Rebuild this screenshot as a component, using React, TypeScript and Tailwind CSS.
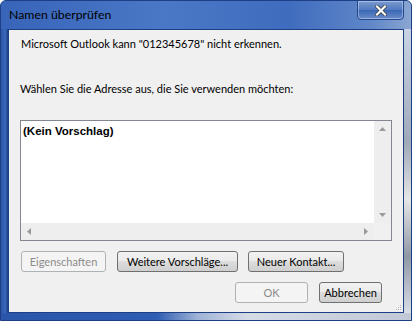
import React from "react";

const font = { fontFamily: 'Lato, "Noto Sans", "Liberation Sans", sans-serif' };

function Btn({ label, w, disabled }: { label: string; w: string; disabled?: boolean }) {
  return (
    <div
      className={
        "flex h-[21px] items-center justify-center rounded-[3px] border text-[11px] leading-none " +
        w +
        (disabled
          ? " border-[#adb2b5] bg-[#f4f4f4] text-[#8b8b8b]"
          : " border-[#707070] bg-[linear-gradient(#f2f2f2_0%,#ebebeb_45%,#dddddd_50%,#cfcfcf_100%)] text-[#000]")
      }
    >
      <span className="pb-[1px]">{label}</span>
    </div>
  );
}

export default function App() {
  return (
    <div className="relative h-[321px] w-[412px] overflow-hidden bg-white" style={font}>
      <div className="flex h-full w-full flex-col overflow-hidden rounded-t-[6px] border border-[#1c3f86] bg-[#2f5db3]">
        {/* title bar */}
        <div className="relative flex h-[28px] items-center bg-[linear-gradient(90deg,#3864b9_0%,#4a78c6_40%,#3f6cbe_70%,#5f86c8_90%,#8aa6d2_100%)] pl-[8px]">
          <span className="text-[12.3px] text-black">Namen überprüfen</span>
          <div className="absolute right-[7px] top-[-1px] flex h-[20px] w-[47px] items-center justify-center rounded-b-[4px] border border-[#24478e] bg-[linear-gradient(#7c9bd0,#4f79c1_50%,#3a66b4_51%,#6a8dc9)] shadow-[inset_0_0_0_1px_rgba(255,255,255,0.35)]">
            <svg width="12" height="11" viewBox="0 0 12 11">
              <path d="M2 1.5 L10 9.5 M10 1.5 L2 9.5" stroke="#333" strokeWidth="3.6" strokeLinecap="square" />
              <path d="M2 1.5 L10 9.5 M10 1.5 L2 9.5" stroke="#fff" strokeWidth="2.2" strokeLinecap="square" />
            </svg>
          </div>
        </div>
        <div className="flex flex-1">
          <div className="w-[7px] bg-[linear-gradient(90deg,#2a55aa,#3b68ba_60%,#1c3f86)]" />
          {/* client */}
          <div className="relative flex w-[396px] flex-col border border-[#1c3f86] bg-[#f0f0f0] text-[11px] text-black">
            <div className="pl-[12px] pt-[6px] leading-[16px]">Microsoft Outlook kann "012345678" nicht erkennen.</div>
            <div className="pl-[11px] pt-[29px] leading-[16px]">Wählen Sie die Adresse aus, die Sie verwenden möchten:</div>
            {/* list box */}
            <div className="ml-[11px] mt-[23px] flex h-[121px] w-[372px] flex-col border border-[#828790] bg-white">
              <div className="flex flex-1">
                <div className="flex-1 pl-[2px] pt-[2px]">
                  <span className="text-[11.5px] font-bold leading-[13px]" style={{ fontFamily: '"Liberation Sans", Arial, sans-serif' }}>
                    (Kein Vorschlag)
                  </span>
                </div>
                <div className="flex w-[17px] flex-col items-center justify-between bg-[#eeeeee] py-[6px]">
                  <svg width="7" height="4" viewBox="0 0 7 4"><path d="M0 4 L3.5 0 L7 4 Z" fill="#9a9a9a" /></svg>
                  <svg width="7" height="4" viewBox="0 0 7 4"><path d="M0 0 L3.5 4 L7 0 Z" fill="#9a9a9a" /></svg>
                </div>
              </div>
              <div className="flex h-[17px]">
                <div className="flex flex-1 items-center justify-between bg-[#eeeeee] px-[6px]">
                  <svg width="4" height="7" viewBox="0 0 4 7"><path d="M4 0 L0 3.5 L4 7 Z" fill="#9a9a9a" /></svg>
                  <svg width="4" height="7" viewBox="0 0 4 7"><path d="M0 0 L4 3.5 L0 7 Z" fill="#9a9a9a" /></svg>
                </div>
                <div className="w-[17px] bg-[#f0f0f0]" />
              </div>
            </div>
            {/* button row 1 */}
            <div className="mt-[10px] flex pl-[12px]">
              <Btn label="Eigenschaften" w="w-[85px]" disabled />
              <div className="ml-[11px]">
                <Btn label="Weitere Vorschläge..." w="w-[121px]" />
              </div>
              <div className="ml-[10px]">
                <Btn label="Neuer Kontakt..." w="w-[96px]" />
              </div>
            </div>
            {/* button row 2 */}
            <div className="mt-[10px] flex pl-[226px]">
              <Btn label="OK" w="w-[73px]" disabled />
              <div className="ml-[11px]">
                <Btn label="Abbrechen" w="w-[63px]" />
              </div>
            </div>
            <div className="absolute bottom-[2px] right-[2px] grid grid-cols-3 gap-[1px]">
              {[0, 0, 1, 0, 1, 1, 1, 1, 1].map((v, i) => (
                <div key={i} className={"h-[1px] w-[1px] " + (v ? "bg-[#b8b8b8]" : "bg-transparent")} />
              ))}
            </div>
          </div>
          <div className="flex-1 bg-[linear-gradient(#c8d3e6,#9fa9b8_40%,#e6e6e6_60%,#8f98a6_80%,#d8dde6)]" />
        </div>
        <div className="h-[7px] bg-[linear-gradient(90deg,#2a55aa_0%,#2f5db3_38%,#9fb3d6_48%,#d6dce6_60%,#c0c8d6_100%)]" />
      </div>
    </div>
  );
}
